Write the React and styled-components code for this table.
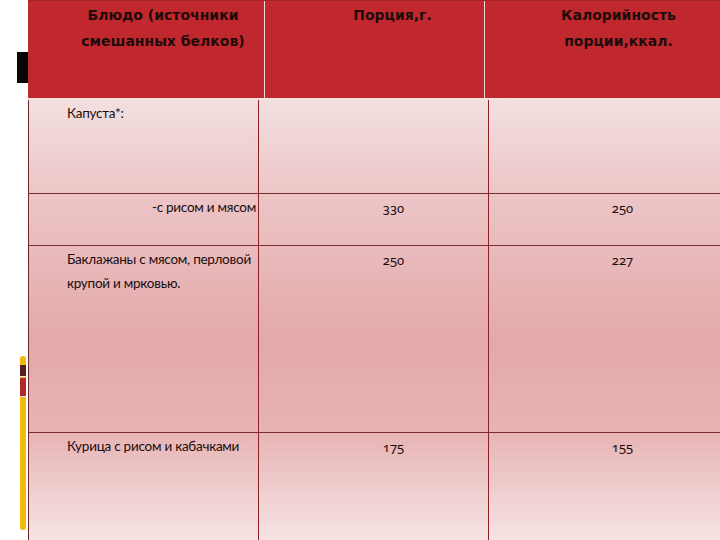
import styled, { createGlobalStyle } from "styled-components";

const GlobalStyle = createGlobalStyle`
  html, body {
    margin: 0;
    padding: 0;
    background: #ffffff;
  }
`;

// таблица блюд
const rows = [
  { name: "Капуста*:", portion: "", kcal: "", height: 94 },
  { name: "-с рисом и мясом", portion: "330", kcal: "250", height: 52, right: true },
  {
    name: "Баклажаны с мясом, перловой крупой и мрковью.",
    portion: "250",
    kcal: "227",
    height: 187,
  },
  { name: "Курица с рисом и кабачками", portion: "175", kcal: "155" },
];

function App() {
  return (
    <>
      <GlobalStyle />
      <Slide>
        <Rail>
          <BlackMark />
          <ColorBar>
            <BarSegment $color="#5a1f1c" $height={11} />
            <BarSegment $color="#b5282a" $height={18} />
          </ColorBar>
        </Rail>

        <Table>
          <HeaderRow>
            <HeaderCell $pad={38}>Блюдо (источники смешанных белков)</HeaderCell>
            <HeaderCell $pad={40} $divider>
              Порция,г.
            </HeaderCell>
            <HeaderCell $pad={36} $divider>
              Калорийность порции,ккал.
            </HeaderCell>
          </HeaderRow>

          <Body>
            {rows.map((row) => (
              <Row key={row.name} $height={row.height}>
                <NameCell $right={row.right}>{row.name}</NameCell>
                <NumCell $pad={40}>{row.portion}</NumCell>
                <NumCell $pad={36} $last>
                  {row.kcal}
                </NumCell>
              </Row>
            ))}
          </Body>
        </Table>
      </Slide>
    </>
  );
}

const Slide = styled.div`
  width: 720px;
  height: 540px;
  display: flex;
  overflow: hidden;
  background: #ffffff;
`;

// левая декоративная полоса
const Rail = styled.div`
  width: 28px;
  flex-shrink: 0;
  display: flex;
  flex-direction: column;
  align-items: flex-end;
  padding-top: 52px;
  box-sizing: border-box;
`;

const BlackMark = styled.div`
  width: 11px;
  height: 31px;
  background: #050505;
`;

const ColorBar = styled.div`
  margin-top: 273px;
  margin-right: 2px;
  width: 6px;
  height: 174px;
  border-radius: 3px;
  background: #f2b90f;
  padding-top: 9px;
  box-sizing: border-box;
  display: flex;
  flex-direction: column;
  gap: 1px;
`;

const BarSegment = styled.div`
  height: ${(p) => p.$height}px;
  background: ${(p) => p.$color};
  border-bottom: 1px solid #f4ead8;
`;

const Table = styled.div`
  flex: 1;
  display: flex;
  flex-direction: column;
`;

const HeaderRow = styled.div`
  display: grid;
  grid-template-columns: 236px 220px 1fr;
  height: 100px;
  flex-shrink: 0;
  background: #c0282d;
  border-top: 1px solid #a52227;
  border-bottom: 2px solid #f4e4dc;
  box-sizing: border-box;
`;

const HeaderCell = styled.div`
  padding: 1px 4px 0 ${(p) => p.$pad}px;
  border-left: ${(p) => (p.$divider ? "1px solid #f1d9d6" : "none")};
  text-align: center;
  font-family: "DejaVu Sans", "Liberation Sans", sans-serif;
  font-weight: 700;
  font-size: 14px;
  line-height: 26px;
  color: #1e0b0b;
`;

const Body = styled.div`
  flex: 1;
  display: flex;
  flex-direction: column;
  border-left: 1px solid #6b2a2a;
  background: linear-gradient(
    to bottom,
    #f3dfdf 0%,
    #ecc5c6 22%,
    #e3a8aa 55%,
    #e7b3b4 75%,
    #f6e3e3 100%
  );
`;

const Row = styled.div`
  display: grid;
  grid-template-columns: 230px 230px 1fr;
  height: ${(p) => (p.$height ? `${p.$height}px` : "auto")};
  flex: ${(p) => (p.$height ? "0 0 auto" : "1")};
  border-bottom: 1px solid #7e2b2e;
  box-sizing: border-box;

  &:last-child {
    border-bottom: none;
  }
`;

const NameCell = styled.div`
  padding: ${(p) => (p.$right ? "1px 2px 0 0" : "1px 0 0 38px")};
  text-align: ${(p) => (p.$right ? "right" : "left")};
  border-right: 1px solid #8d1f27;
  font-family: Lato, "Liberation Sans", sans-serif;
  font-size: 13.5px;
  letter-spacing: -0.25px;
  line-height: 24px;
  color: #1a0c0c;
`;

const NumCell = styled.div`
  padding: 2px 0 0 ${(p) => p.$pad}px;
  text-align: center;
  border-right: ${(p) => (p.$last ? "none" : "1px solid #8d1f27")};
  font-family: "Noto Sans", "DejaVu Serif", serif;
  font-variant-numeric: oldstyle-nums;
  font-size: 13px;
  line-height: 24px;
  color: #1a0c0c;
`;

export default App;
